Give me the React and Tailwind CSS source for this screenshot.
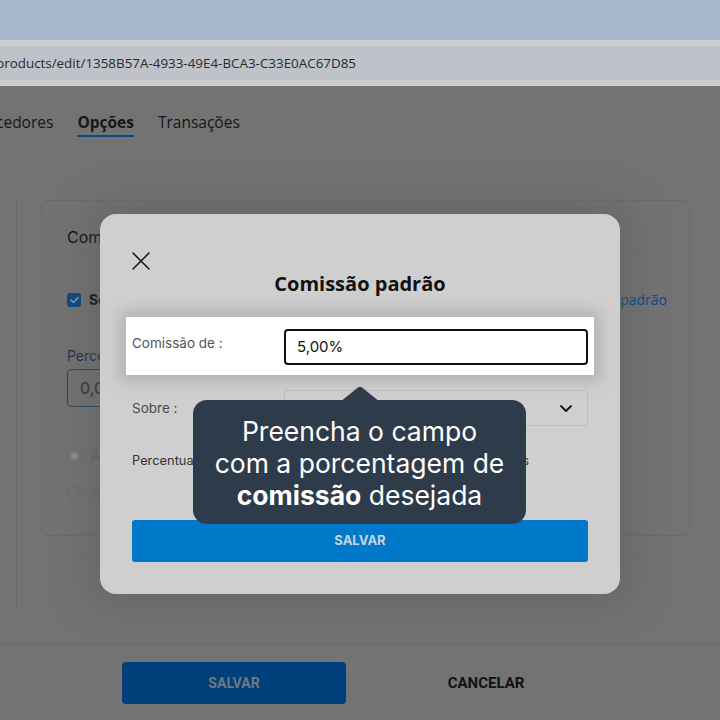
import React from "react";

function CloseIcon() {
  return (
    <svg width="18" height="18" viewBox="0 0 18 18" fill="none" stroke="#1a1a1a" strokeWidth="1.6" strokeLinecap="round">
      <path d="M1 1 L17 17 M17 1 L1 17" />
    </svg>
  );
}

function Chevron() {
  return (
    <svg width="14" height="9" viewBox="0 0 14 9" fill="none" stroke="#111" strokeWidth="1.8" strokeLinecap="round" strokeLinejoin="round">
      <path d="M2 2 L7 7 L12 2" />
    </svg>
  );
}

function CheckBox() {
  return (
    <div className="w-[14px] h-[14px] rounded-[3px] bg-[#0d4a80] flex items-center justify-center">
      <svg width="9" height="8" viewBox="0 0 9 8" fill="none" stroke="#7f9ab3" strokeWidth="1.6" strokeLinecap="round" strokeLinejoin="round">
        <path d="M1 4 L3.5 6.5 L8 1.5" />
      </svg>
    </div>
  );
}

export default function App() {
  const sans = { fontFamily: "Inter, 'Noto Sans', sans-serif" };
  return (
    <div className="relative w-[720px] h-[720px] overflow-hidden bg-[#737373] flex flex-col" style={sans}>
      {/* browser chrome */}
      <div className="h-[40px] bg-[#a6b7ce] shrink-0" />
      <div className="h-[6px] bg-[#cdcdcd] shrink-0" />
      <div className="h-[34px] bg-[#bfc3c9] shrink-0 flex items-center">
        <span className="-ml-[4px] text-[13.4px] text-[#2a2a2a] whitespace-nowrap" style={{ fontFamily: "'Open Sans', sans-serif" }}>
          products/edit/1358B57A-4933-49E4-BCA3-C33E0AC67D85
        </span>
      </div>
      <div className="h-[6px] bg-[#cdcdcd] shrink-0" />

      {/* tabs */}
      <div className="h-[64px] shrink-0 flex items-end gap-[24px] text-[15.5px] text-[#161616] pb-[17px]" style={{ fontFamily: "'Open Sans', sans-serif" }}>
        <span className="-ml-[4px] leading-[22px]">cedores</span>
        <span className="relative font-bold leading-[22px]">
          Opções
          <span className="absolute left-0 right-0 -bottom-[4px] h-[2px] bg-[#0b4a80]" />
        </span>
        <span className="leading-[22px]">Transações</span>
      </div>

      {/* page body under the overlay */}
      <div className="flex-1 flex flex-col">
        <div className="ml-[16px] mt-[50px] h-[412px] border-l border-[#6a6a6a] pl-[24px]">
          <div className="w-[649px] h-[336px] border border-[#6b6b6b] rounded-[8px] pl-[25px] pt-[26px]">
            <div className="text-[16px] text-[#101010] leading-[20px]">Comissão</div>
            <div className="mt-[42px] flex items-center">
              <CheckBox />
              <span className="ml-[8px] font-bold text-[14px] text-[#111]">Se</span>
              <span className="ml-auto mr-[22px] text-[14px] text-[#0b4a85]" style={{ fontFamily: "'Open Sans', sans-serif" }}>padrão</span>
            </div>
            <div className="mt-[37px] text-[14px] text-[#1b3350] leading-[18px]">Percentual</div>
            <div className="mt-[4px] w-[200px] h-[38px] border border-[#2f4760] rounded-[4px] flex items-center pl-[12px] text-[16px] text-[#3a2f26]">0,00%</div>
            <div className="mt-[38px] flex items-center gap-[10px]">
              <div className="w-[14px] h-[14px] rounded-full border border-[#6a6a6a] bg-[#7a7a7a] flex items-center justify-center">
                <div className="w-[6px] h-[6px] rounded-full bg-[#8d8d8d]" />
              </div>
              <span className="text-[14px] text-[#666]">A</span>
            </div>
            <div className="mt-[16px] flex items-center gap-[10px]">
              <div className="w-[14px] h-[14px] rounded-full border border-[#6a6a6a]" />
              <span className="text-[14px] text-[#666]">A</span>
            </div>
          </div>
        </div>
        <div className="mt-[32px] border-t border-[#6b6b6b] flex-1 flex justify-center items-start gap-[28px] pt-[17px]">
          <div className="w-[224px] h-[42px] rounded-[4px] bg-[#00407a] flex items-center justify-center text-[14px] font-bold text-[#6f7883]" style={{ fontFamily: "Roboto, sans-serif" }}>SALVAR</div>
          <div className="w-[224px] h-[42px] flex items-center justify-center text-[15px] font-bold text-[#111]" style={{ fontFamily: "Roboto, sans-serif" }}>CANCELAR</div>
        </div>
      </div>

      {/* dialog */}
      <div className="absolute left-[100px] top-[214px] w-[520px] h-[380px] rounded-[16px] bg-[#cfcfcf] shadow-[0_0_40px_12px_rgba(80,80,80,0.35)] px-[32px] flex flex-col">
        <div className="pt-[38px] h-[56px]">
          <CloseIcon />
        </div>
        <div className="mt-[2px] text-center text-[20px] font-bold text-[#111] leading-[24px]" style={{ fontFamily: "'Open Sans', sans-serif" }}>
          Comissão padrão
        </div>
        <div className="mt-[21px] -mx-[6px] px-[6px] h-[58px] bg-white flex items-start shadow-[0_0_14px_6px_rgba(175,175,175,0.9)]">
          <span className="w-[152px] pt-[17px] text-[13.5px] text-[#555] leading-[18px]">Comissão de :</span>
          <div className="mt-[12px] flex-1 h-[36px] border-2 border-[#111] rounded-[4px] flex items-center pl-[11px] text-[15px] text-[#111]">5,00%</div>
        </div>
        <div className="mt-[15px] flex items-center">
          <span className="w-[152px] text-[13.5px] text-[#4a4a4a]">Sobre :</span>
          <div className="flex-1 h-[36px] border border-[#bdbdbd] rounded-[2px] flex items-center justify-end pr-[14px]">
            <Chevron />
          </div>
        </div>
        <div className="mt-[26px] text-[12.85px] text-[#333] leading-[18px] whitespace-nowrap">
          Percentual de comissão aplicado sobre o valor total dos produtos
        </div>
        <div className="mt-[50px] h-[42px] rounded-[3px] bg-[#0179ca] flex items-center justify-center text-[13px] font-bold text-[#c9d3dc]">
          SALVAR
        </div>
      </div>

      {/* guide tooltip */}
      <div className="absolute left-[193px] top-[386px] w-[333px]">
        <svg className="absolute left-[147px] top-0" width="40" height="16" viewBox="0 0 40 16">
          <path d="M0 16 L18 1.5 Q20 0 22 1.5 L40 16 Z" fill="#2e3b4b" />
        </svg>
        <div className="mt-[14px] h-[124px] rounded-[14px] bg-[#2e3b4b] flex flex-col items-center justify-center pt-[2px] text-white text-[26.5px] leading-[32px] text-center">
          <span>Preencha o campo</span>
          <span>com a porcentagem de</span>
          <span><b className="font-bold">comissão</b> desejada</span>
        </div>
      </div>
    </div>
  );
}
